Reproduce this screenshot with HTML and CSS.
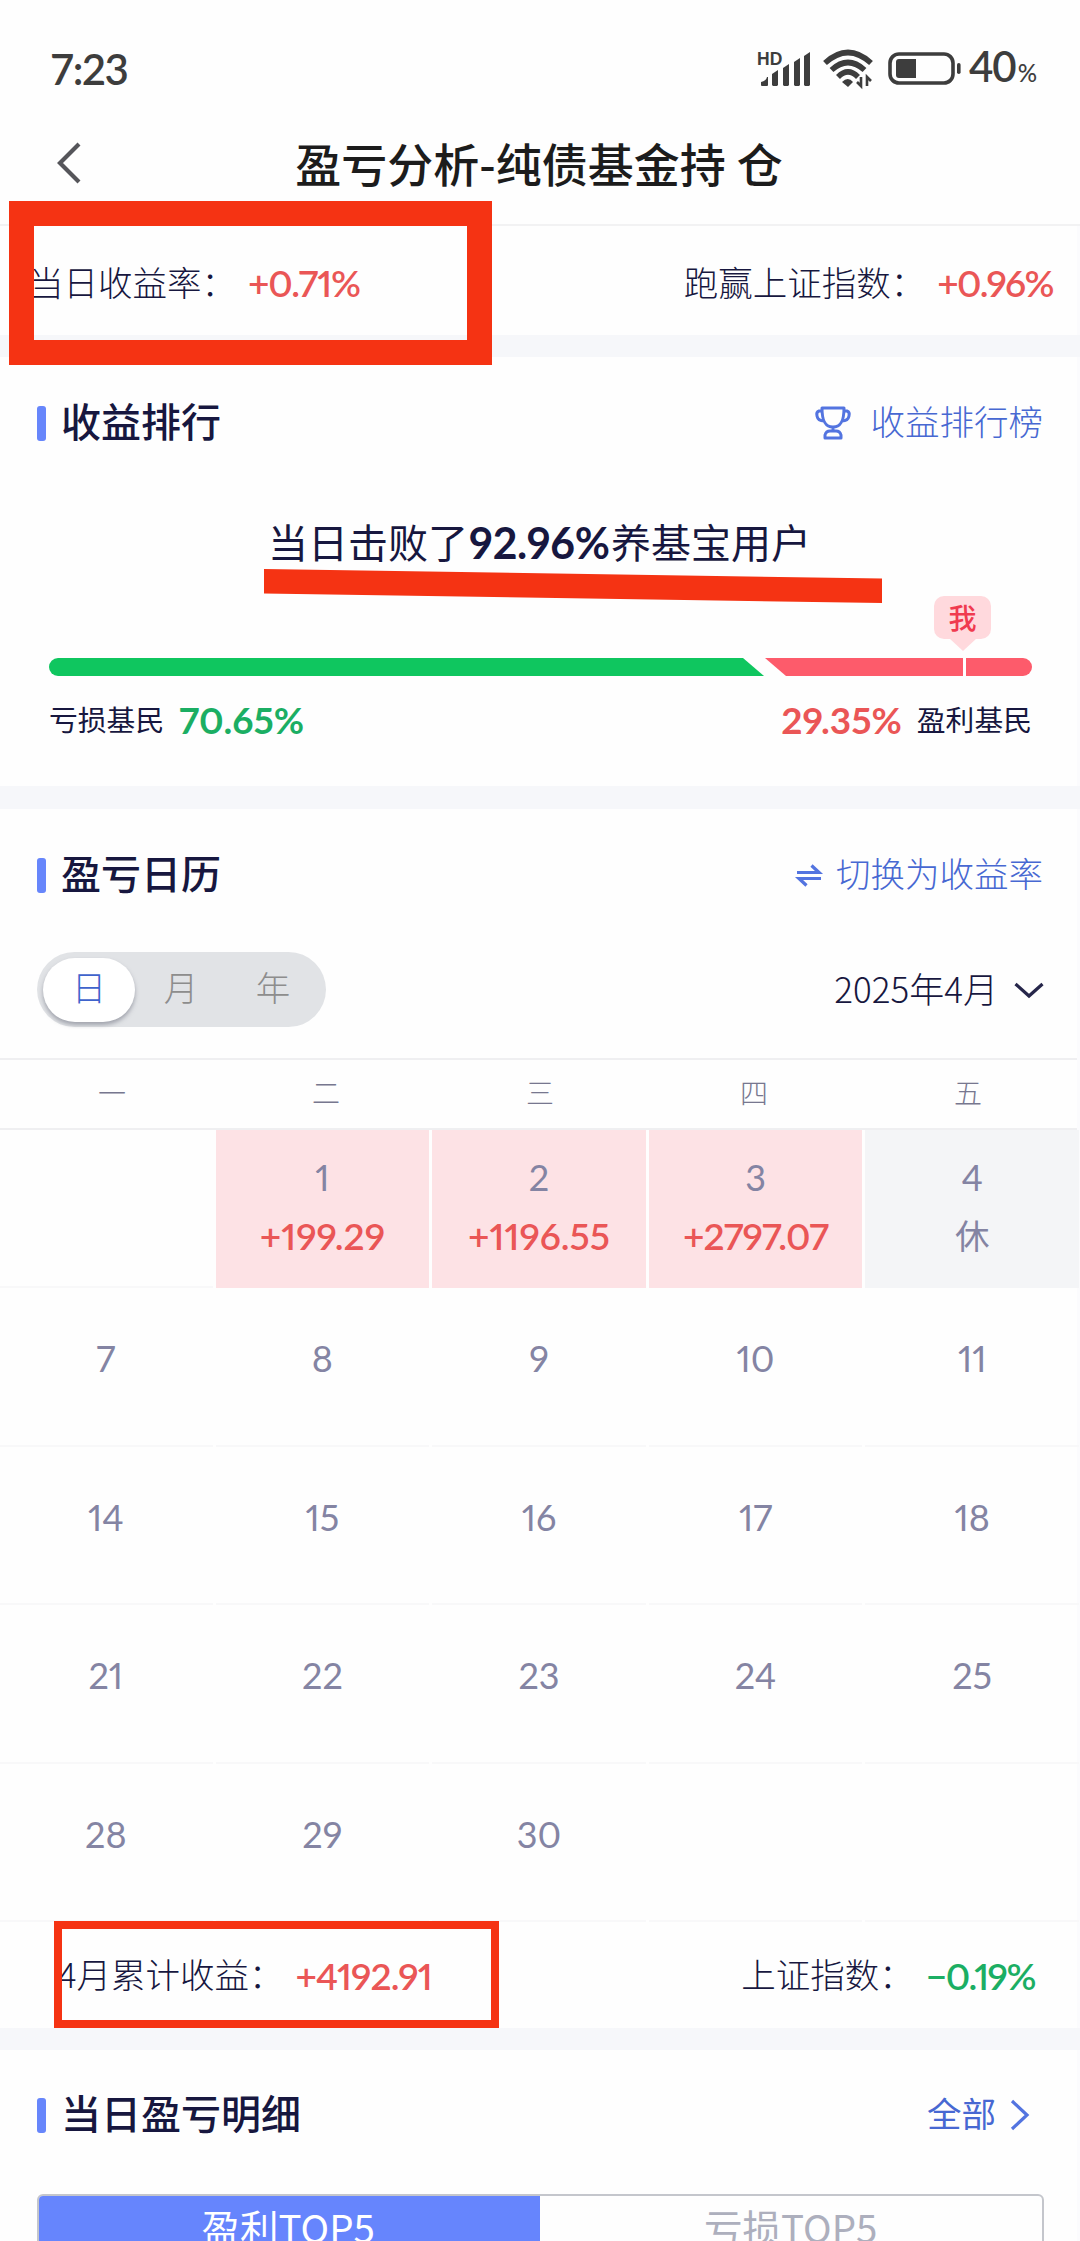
FILE: index.html
```html
<!DOCTYPE html>
<html lang="zh-CN">
<head>
<meta charset="utf-8">
<title>盈亏分析</title>
<link rel="stylesheet" href="styles.css">
</head>
<body>
<div class="page">
  <header class="status">
    <span class="clock">7:23</span>
    <div class="status-icons">
      <svg class="signal" width="56" height="38" viewBox="0 0 56 38" fill="#3d3d3d">
        <text x="0" y="15" class="hd">HD</text>
        <path d="M4 35v-3q5-1 6-5h1v8q0 1-1 1H5q-1 0-1-1zM15 24l6-4v15l-1 1h-4l-1-1zM26 18l6-4v21l-1 1h-4l-1-1zM37 12l6-4v27l-1 1h-4l-1-1zM47 6l6-4v33l-1 1h-4l-1-1z"/>
      </svg>
      <svg class="wifi" width="50" height="40" viewBox="0 0 50 40" fill="none" stroke="#3d3d3d" stroke-width="5.600">
        <path d="M2 14Q25-7 48 14M8.500 21Q25 6 41.500 21M15 28Q25 18 35 28"/>
        <path d="M19 33Q25 27 30 33L25 38z" fill="#3d3d3d" stroke="none"/>
        <path d="M38 28v9l-4-4M44 37v-9l4 4" stroke-width="2.600"/>
      </svg>
      <svg class="battery" width="74" height="34" viewBox="0 0 74 34">
        <rect x="2" y="2" width="63" height="29" rx="9" fill="none" stroke="#3d3d3d" stroke-width="3.600"/>
        <path d="M11 7h17v19H11q-3 0-3-3V10q0-3 3-3z" fill="#3d3d3d"/>
        <rect x="69" y="11" width="3.600" height="11" rx="1.800" fill="#3d3d3d"/>
      </svg>
      <span class="pct">40<small>%</small></span>
    </div>
  </header>

  <nav class="nav">
    <svg class="back" width="26" height="44" viewBox="0 0 26 44"><path d="M23 3L4 22l19 19" fill="none" stroke="#55555a" stroke-width="4.200"/></svg>
    <h1>盈亏分析-纯债基金持<i></i>仓</h1>
  </nav>

  <section class="card rates">
    <div class="pair"><span class="label">当日收益率：</span><b class="num up n1">+0.71%</b></div>
    <div class="pair"><span class="label">跑赢上证指数：</span><b class="num up n2">+0.96%</b></div>
    <div class="mark-box big"></div>
  </section>

  <section class="card rank">
    <div class="head">
      <h2>收益排行</h2>
      <a class="link">
        <svg class="cup" width="36" height="34" viewBox="0 0 36 34" fill="none" stroke="#5374e0" stroke-width="3" stroke-linejoin="round">
          <path d="M7 2h22c0 11-2 19-11 19S7 13 7 2zM7 5H4Q1 6 2 10q1 5 7 5M29 5h3q3 1 2 5-1 5-7 5M18 21v4M10 32v-3q1-4 5-4h6q4 0 5 4v3z"/>
        </svg>
        <span>收益排行榜</span>
      </a>
    </div>
    <p class="beat"><span>当日击败了</span><b class="num">92.96%</b><span>养基宝用户</span></p>
    <svg class="underline" width="620" height="36" viewBox="0 0 620 36"><path d="M1 1L619 10.500V35L1 25.500z" fill="#f53313"/></svg>
    <div class="me">我</div>
    <svg class="ratio" width="984" height="18" viewBox="0 0 984 18">
      <path d="M9 0H694L715 18H9A9 9 0 0 1 9 0z" fill="#0fc65f"/>
      <path d="M716 0H974a9 9 0 0 1 0 18H737z" fill="#fd5b6b"/>
      <path d="M915.500 0v18" stroke="#fff" stroke-width="3"/>
    </svg>
    <div class="legend">
      <div><span>亏损基民</span><b class="num down">70.65%</b></div>
      <div><b class="num up">29.35%</b><span>盈利基民</span></div>
    </div>
  </section>

  <section class="card calendar">
    <div class="head">
      <h2>盈亏日历</h2>
      <a class="link">
        <svg class="swap" width="24" height="23" viewBox="0 0 24 23" fill="none" stroke="#5374e0" stroke-width="3.200"><path d="M0 8.500h22L14.500 1.500M24 14.500H2l7.500 7"/></svg>
        <span>切换为收益率</span>
      </a>
    </div>
    <div class="tools">
      <div class="toggle"><span class="on">日</span><span>月</span><span>年</span></div>
      <div class="month"><span>2025年4月</span>
        <svg width="30" height="18" viewBox="0 0 30 18"><path d="M1.500 3L15 15 28.500 3" fill="none" stroke="#26264a" stroke-width="3.200"/></svg>
      </div>
    </div>
    <div class="week"><span>一</span><span>二</span><span>三</span><span>四</span><span>五</span></div>
    <div class="days">
      <div></div>
      <div class="gain"><i>1</i><b>+199.29</b></div>
      <div class="gain"><i>2</i><b>+1196.55</b></div>
      <div class="gain"><i>3</i><b class="tight">+2797.07</b></div>
      <div class="rest"><i>4</i><em>休</em></div>
      <div><i>7</i></div><div><i>8</i></div><div><i>9</i></div><div><i>10</i></div><div><i>11</i></div>
      <div><i>14</i></div><div><i>15</i></div><div><i>16</i></div><div><i>17</i></div><div><i>18</i></div>
      <div><i>21</i></div><div><i>22</i></div><div><i>23</i></div><div><i>24</i></div><div><i>25</i></div>
      <div><i>28</i></div><div><i>29</i></div><div><i>30</i></div><div></div><div></div>
    </div>
    <div class="sum">
      <div class="pair"><span class="label">4月累计收益：</span><b class="num up n3">+4192.91</b></div>
      <div class="pair"><span class="label">上证指数：</span><b class="num down n4">−0.19%</b></div>
      <div class="mark-box thin"></div>
    </div>
  </section>

  <section class="card detail">
    <div class="head">
      <h2>当日盈亏明细</h2>
      <a class="link all"><span>全部</span>
        <svg width="20" height="32" viewBox="0 0 20 32"><path d="M2 2l15 14L2 30" fill="none" stroke="#5374e0" stroke-width="3.200"/></svg>
      </a>
    </div>
    <div class="tabs"><span class="on">盈利TOP5</span><span>亏损TOP5</span></div>
  </section>
</div>
</body>
</html>
```
FILE: styles.css
```css
* { box-sizing: border-box; margin: 0; padding: 0; }
body {
  width: 1080px;
  height: 2241px;
  overflow: hidden;
  background: #fefefe;
  color: #17173f;
  font-family: "Noto Sans CJK SC", sans-serif;
}
i, em { font-style: normal; }
svg { display: block; flex: none; overflow: visible; }
.page { height: 2241px; overflow: hidden; background: #f6f7fa; display: flex; flex-direction: column; }
.num { font-family: Lato, sans-serif; font-weight: 600; font-size: 37px; white-space: nowrap; font-feature-settings: "pnum"; }
.up { color: #ea5656; }
.down { color: #1bae63; }
.n1 { letter-spacing: -1.2px; }
.n2 { letter-spacing: -1.6px; }
.n3 { letter-spacing: -0.9px; }
.n4 { letter-spacing: -1.5px; }

.status {
  height: 104px;
  flex: none;
  background: #fefefe;
  display: flex;
  justify-content: space-between;
  align-items: center;
  padding: 34px 44px 0 50px;
  color: #3d3d3d;
  font-family: Lato, sans-serif;
}
.clock { font-size: 42px; font-weight: 600; line-height: 70px; letter-spacing: -1.6px; }
.status-icons { display: flex; align-items: center; }
.hd { font: bold 17.5px "Liberation Sans", sans-serif; }
.wifi { margin: 0 15px 0 10px; }
.pct { margin-left: 7px; font-size: 42px; font-weight: 600; line-height: 70px; letter-spacing: -1px; }
.pct small { font-size: 24px; font-weight: 500; margin-left: 2px; }

.nav { height: 122px; flex: none; background: #fefefe; border-bottom: 2px solid #f2f2f3; position: relative; display: flex; align-items: center; justify-content: center; }
.nav h1 { font-size: 46px; line-height: 60px; font-weight: 500; color: #1c1c1c; white-space: nowrap; margin: -5px 2px 0 0; }
.nav h1 i { display: inline-block; width: 11px; }
.back { position: absolute; left: 56px; top: 37px; }

.card { background: #fefefe; width: 1077px; flex: none; position: relative; box-shadow: 3px 0 #fbfbfd; }
.pair { display: flex; align-items: center; }
.label { font-size: 34.5px; font-weight: 300; line-height: 50px; white-space: nowrap; margin-top: -4px; }

.rates { height: 109px; display: flex; justify-content: space-between; align-items: center; padding: 4px 24px 0 29px; }
.rates .num { margin-left: 12px; }
.mark-box { position: absolute; border: 25px solid #f53313; }
.mark-box.big { left: 9px; top: -25px; width: 483px; height: 164px; z-index: 2; }

.head { display: flex; justify-content: space-between; align-items: center; height: 60px; padding: 0 34px 0 37px; }
.head h2 { font-size: 40px; font-weight: 500; line-height: 55px; padding-bottom: 5px; margin-left: -37px; padding-left: 61px; position: relative; display: flex; align-items: center; }
.head h2::before { content: ""; position: absolute; left: 37px; top: 13px; width: 9px; height: 35px; border-radius: 3px; background: #6786fb; }
.link { display: flex; align-items: center; font-size: 34.5px; font-weight: 300; color: #4768d2; }
.link span { line-height: 55px; padding-bottom: 5px; }

.rank { margin-top: 22px; height: 429px; padding-top: 36px; }
.cup { margin-right: 20px; }
.beat { margin-top: 60px; padding-left: 268px; font-size: 40px; line-height: 60px; height: 60px; display: flex; align-items: center; white-space: nowrap; }
.beat span { margin-top: -5px; }
.beat .num { font-size: 43px; font-weight: 700; width: 143px; padding-left: 1px; letter-spacing: -0.2px; }
.underline { position: absolute; left: 263px; top: 211px; }
.me { position: absolute; left: 934px; top: 239px; width: 57px; height: 43px; border-radius: 10px; background: #ffd9dd; color: #f03b50; font-size: 28px; font-weight: 500; line-height: 43px; text-align: center; }
.me::after { content: ""; position: absolute; left: 15px; top: 42px; border: 14px solid transparent; border-top: 13px solid #ffd9dd; border-bottom: 0; }
.ratio { margin: 85px 0 0 49px; }
.legend { display: flex; justify-content: space-between; padding: 0 45px 0 49px; margin-top: 19px; }
.legend div { display: flex; align-items: center; gap: 15px; font-size: 28.8px; line-height: 50px; }
.legend span { margin-top: -3px; }
.legend .num { font-weight: 700; }

.calendar { margin-top: 23px; height: 1219px; padding-top: 36px; }
.swap { margin-right: 15px; }
.tools { display: flex; justify-content: space-between; align-items: center; padding: 0 33px 0 37px; margin-top: 47px; height: 75px; }
.toggle { width: 289px; height: 75px; border-radius: 38px; background: #e1e3e6; display: flex; align-items: center; padding: 0 6px; font-size: 34.5px; font-weight: 300; color: #8d8d8d; }
.toggle span { width: 92px; height: 64px; line-height: 57px; text-align: center; }
.toggle .on { background: #fff; border-radius: 32px; color: #3f63cc; box-shadow: 0 3px 4px #77798799; }
.month { display: flex; align-items: center; gap: 16px; font-size: 35px; font-weight: 300; line-height: 55px; }
.month span { padding-bottom: 5px; }
.week { margin-top: 31px; height: 72px; border: solid #efeff1; border-width: 2px 0; display: grid; grid-template-columns: repeat(5, 214px); padding-left: 5px; font-size: 28px; font-weight: 300; line-height: 64px; text-align: center; color: #77778f; }
.days { display: grid; grid-template-columns: repeat(5, 213.6px); column-gap: 3px; grid-auto-rows: 158.4px; width: 1080px; margin-left: -1px; }
.days div { border-bottom: 2px solid #f8f8f9; display: flex; flex-direction: column; align-items: center; padding-top: 45px; font-family: Lato, "Noto Sans CJK SC", sans-serif; color: #8484a3; }
.days i { font-size: 36px; line-height: 50px; font-feature-settings: "pnum"; }
.days div:nth-child(-n+5) { padding-top: 22px; }
.days b { font-size: 37px; font-weight: 600; line-height: 50px; margin-top: 9px; color: #ea5656; font-feature-settings: "pnum"; }
.days .tight { letter-spacing: -0.9px; }
.days em { font-size: 34.5px; line-height: 50px; margin-top: 9px; }
.days div.gain { background: #fde2e5; border-color: #fde2e5; }
.days div.rest { background: #f4f5f7; border-color: #f4f5f7; }
.sum { height: 105px; position: relative; display: flex; justify-content: space-between; align-items: center; padding: 2px 42px 0 58px; }
.sum .num { margin-left: 12px; }
.mark-box.thin { border-width: 8px; left: 54px; top: -1px; width: 445px; height: 107px; }

.detail { margin-top: 22px; height: 191px; padding-top: 35px; }
.link.all { font-weight: 400; gap: 14px; padding-right: 13px; }
.tabs { margin: 49px 0 0 37px; width: 1007px; height: 80px; display: flex; border: 2px solid #c4c6cc; border-radius: 6px; font-size: 38.5px; line-height: 60px; text-align: center; color: #adafbd; overflow: hidden; }
.tabs span { flex: 1; }
.tabs .on { background: #6685fd; color: #fff; margin: -2px 0 0 -2px; padding-top: 2px; }
```
